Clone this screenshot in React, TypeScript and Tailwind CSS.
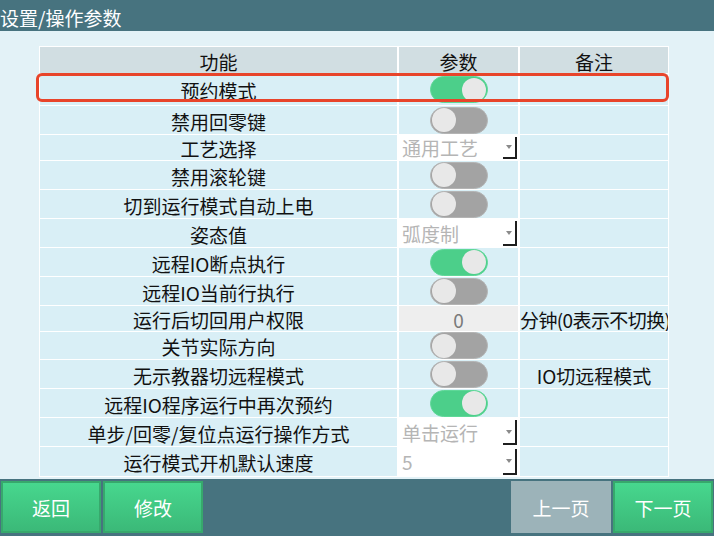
import React from "react";

type Param =
  | { kind: "toggle"; on: boolean }
  | { kind: "select"; value: string }
  | { kind: "input"; value: string };

type Row = { label: string; h: number; param: Param; note?: string; noteLeft?: boolean };

const rows: Row[] = [
  { label: "预约模式", h: 31, param: { kind: "toggle", on: true } },
  { label: "禁用回零键", h: 28, param: { kind: "toggle", on: false } },
  { label: "工艺选择", h: 25, param: { kind: "select", value: "通用工艺" } },
  { label: "禁用滚轮键", h: 28, param: { kind: "toggle", on: false } },
  { label: "切到运行模式自动上电", h: 28, param: { kind: "toggle", on: false } },
  { label: "姿态值", h: 28, param: { kind: "select", value: "弧度制" } },
  { label: "远程IO断点执行", h: 28, param: { kind: "toggle", on: true } },
  { label: "远程IO当前行执行", h: 28, param: { kind: "toggle", on: false } },
  { label: "运行后切回用户权限", h: 25, param: { kind: "input", value: "0" }, note: "分钟(0表示不切换)", noteLeft: true },
  { label: "关节实际方向", h: 27, param: { kind: "toggle", on: false } },
  { label: "无示教器切远程模式", h: 28, param: { kind: "toggle", on: false }, note: "IO切远程模式" },
  { label: "远程IO程序运行中再次预约", h: 28, param: { kind: "toggle", on: true } },
  { label: "单步/回零/复位点运行操作方式", h: 28, param: { kind: "select", value: "单击运行" } },
  { label: "运行模式开机默认速度", h: 29, param: { kind: "select", value: "5" } },
];

function Toggle({ on }: { on: boolean }) {
  return (
    <div
      className={
        on
          ? "w-[58px] h-[27px] rounded-full bg-[#4ccf8a] border border-[#5fd898] flex items-center justify-end px-[1px]"
          : "w-[58px] h-[27px] rounded-full bg-[#a3a3a3] border border-[#b4b4b4] flex items-center justify-start px-[1px]"
      }
    >
      <div className="w-[24px] h-[24px] rounded-full bg-[#e8e8e8]" />
    </div>
  );
}

function Select({ value }: { value: string }) {
  return (
    <div className="w-full h-full bg-white flex items-stretch">
      <div className="flex-1 flex items-center pl-[3px] text-[#b5b5b5] leading-none">{value}</div>
      <div className="w-[14px] mt-[2px] mb-[1px] mr-[1px] border-r-2 border-b-2 border-[#1e1e1e] flex items-center justify-center">
        <div className="w-0 h-0 border-l-[3px] border-r-[3px] border-t-[4px] border-l-transparent border-r-transparent border-t-[#8a8a8a]" />
      </div>
    </div>
  );
}

export default function App() {
  return (
    <div
      className="w-[714px] h-[536px] flex flex-col overflow-hidden"
      style={{ fontFamily: '"Noto Sans CJK SC", "Noto Sans", sans-serif' }}
    >
      <div className="h-[31px] bg-[#47737f] flex items-center text-white text-[19px] leading-none pt-[3px]">
        设置/操作参数
      </div>
      <div className="flex-1 bg-[#e3f2f7] pt-[15px] pl-[39px]">
        <div className="relative w-[630px]">
          <div className="grid grid-cols-[357px_119px_148px] gap-x-[2px] gap-y-px bg-white p-px text-[19px] text-[#111] leading-none">
            <div className="h-[26px] bg-[#d1dee2] flex items-center justify-center pt-[2px]">功能</div>
            <div className="h-[26px] bg-[#d1dee2] flex items-center justify-center pt-[2px]">参数</div>
            <div className="h-[26px] bg-[#d1dee2] flex items-center justify-center pt-[2px]">备注</div>
            {rows.map((r) => (
              <React.Fragment key={r.label}>
                <div
                  className="bg-[#d9eff6] flex items-center justify-center pt-[2px] whitespace-nowrap"
                  style={{ height: r.h }}
                >
                  {r.label}
                </div>
                <div
                  className={
                    r.param.kind === "input"
                      ? "bg-[#eeeeee] flex items-center justify-center"
                      : "bg-[#d9eff6] flex items-center justify-center"
                  }
                  style={{ height: r.h }}
                >
                  {r.param.kind === "toggle" && <Toggle on={r.param.on} />}
                  {r.param.kind === "select" && <Select value={r.param.value} />}
                  {r.param.kind === "input" && (
                    <span className="text-[#7a7a7a] pt-[2px]">{r.param.value}</span>
                  )}
                </div>
                <div
                  className={
                    r.noteLeft
                      ? "bg-[#d9eff6] flex items-center justify-start overflow-hidden whitespace-nowrap pt-[2px] tracking-[-0.6px]"
                      : "bg-[#d9eff6] flex items-center justify-center overflow-hidden whitespace-nowrap pt-[2px]"
                  }
                  style={{ height: r.h }}
                >
                  {r.note ?? ""}
                </div>
              </React.Fragment>
            ))}
          </div>
          <div className="absolute left-[-3px] top-[27px] w-[633px] h-[29px] border-[3px] border-[#e8442a] rounded-[6px] pointer-events-none" />
        </div>
      </div>
      <div className="h-[57px] bg-[#47737f] flex items-start pt-[2px] pl-[1px] pr-[1px] gap-[2px] text-[19px] text-white leading-none">
        <div className="w-[100px] h-[52px] bg-gradient-to-b from-[#47d78e] to-[#3bb978] border-2 border-[#37a86c] flex items-center justify-center">返回</div>
        <div className="w-[100px] h-[52px] bg-gradient-to-b from-[#47d78e] to-[#3bb978] border-2 border-[#37a86c] flex items-center justify-center">修改</div>
        <div className="flex-1" />
        <div className="w-[100px] h-[52px] bg-[#9cb3b9] flex items-center justify-center">上一页</div>
        <div className="w-[100px] h-[52px] bg-gradient-to-b from-[#47d78e] to-[#3bb978] border-2 border-[#37a86c] flex items-center justify-center">下一页</div>
      </div>
    </div>
  );
}
